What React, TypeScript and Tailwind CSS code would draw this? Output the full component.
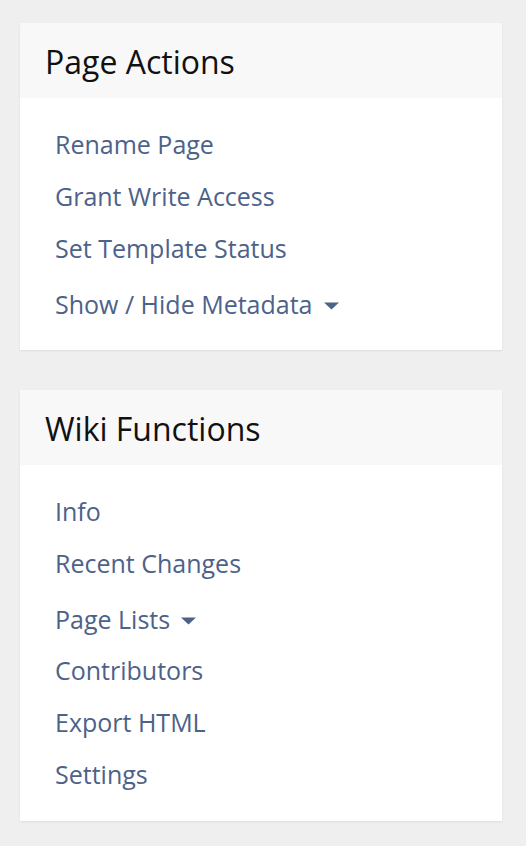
import React from 'react';

type Item = { label: string; caret?: boolean };

const pageActions: Item[] = [
  { label: 'Rename Page' },
  { label: 'Grant Write Access' },
  { label: 'Set Template Status' },
  { label: 'Show / Hide Metadata', caret: true },
];

const wikiFunctions: Item[] = [
  { label: 'Info' },
  { label: 'Recent Changes' },
  { label: 'Page Lists', caret: true },
  { label: 'Contributors' },
  { label: 'Export HTML' },
  { label: 'Settings' },
];

function Caret() {
  return (
    <svg width="15" height="8" viewBox="0 0 15 8" className="ml-[11px] mt-[1px]">
      <path d="M0 0.5 L15 0.5 L7.5 7.5 Z" fill="#4d6289" />
    </svg>
  );
}

function Panel({ title, items }: { title: string; items: Item[] }) {
  return (
    <div className="bg-white shadow-[0_1px_2px_rgba(0,0,0,0.08)]">
      <div className="h-[75px] bg-[#f8f8f8] pl-[25px] flex items-center">
        <h2 className="text-[32px] text-[#111] leading-none pt-[3px]">{title}</h2>
      </div>
      <ul className="pt-[21px] pb-[20px] pl-[35px]">
        {items.map((item) =>
          item.caret ? (
            <li key={item.label} className="h-[52px] mt-[4px] mb-[-1px] flex items-center">
              <a href="#" className="text-[25px] text-[#4d6289] flex items-center">
                {item.label}
                <Caret />
              </a>
            </li>
          ) : (
            <li key={item.label} className="h-[52px] flex items-center">
              <a href="#" className="text-[25px] text-[#4d6289]">
                {item.label}
              </a>
            </li>
          )
        )}
      </ul>
    </div>
  );
}

export default function App() {
  return (
    <div
      className="min-h-[846px] bg-[#efefef] px-[20px] pt-[23px] pr-[24px] flex flex-col gap-[40px]"
      style={{ fontFamily: '"Open Sans", sans-serif' }}
    >
      <Panel title="Page Actions" items={pageActions} />
      <Panel title="Wiki Functions" items={wikiFunctions} />
    </div>
  );
}
